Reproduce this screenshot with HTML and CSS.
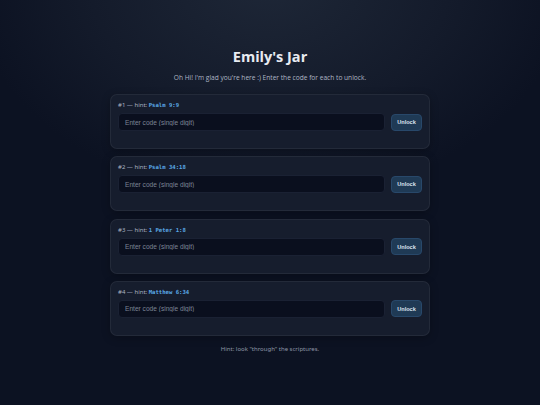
FILE: index.html
```html
<!DOCTYPE html>
<html>
<head>
<meta charset="utf-8">
<link rel="stylesheet" href="styles.css">
</head>
<body>
<main class="wrap">
  <h1 class="title">Emily's Jar</h1>
  <p class="sub">Oh Hi! I'm glad you're here :) Enter the code for each to unlock.</p>
  <section class="card">
    <div class="label">#1 — hint: <code>Psalm 9:9</code></div>
    <div class="row"><input class="code" placeholder="Enter code (single digit)"><button class="btn">Unlock</button></div>
    <div class="msg"></div>
  </section>
  <section class="card">
    <div class="label">#2 — hint: <code>Psalm 34:18</code></div>
    <div class="row"><input class="code" placeholder="Enter code (single digit)"><button class="btn">Unlock</button></div>
    <div class="msg"></div>
  </section>
  <section class="card">
    <div class="label">#3 — hint: <code>1 Peter 1:8</code></div>
    <div class="row"><input class="code" placeholder="Enter code (single digit)"><button class="btn">Unlock</button></div>
    <div class="msg"></div>
  </section>
  <section class="card">
    <div class="label">#4 — hint: <code>Matthew 6:34</code></div>
    <div class="row"><input class="code" placeholder="Enter code (single digit)"><button class="btn">Unlock</button></div>
    <div class="msg"></div>
  </section>
  <p class="foot">Hint: look "through" the scriptures.</p>
</main>
</body>
</html>
```
FILE: styles.css
```css
html, body { margin: 0; padding: 0; }
body {
  width: 540px;
  height: 405px;
  overflow: hidden;
  background: radial-gradient(ellipse 300px 220px at 50% -20px, #1e2737 0%, #141b2b 60%, #0c1222 100%);
  background-color: #0c1222;
  font-family: "Open Sans", "Noto Sans", sans-serif;
  color: #e6e9ef;
}
.wrap {
  width: 320px;
  margin: 0 auto;
  padding-top: 46px;
  display: flex;
  flex-direction: column;
}
.title {
  margin: 0;
  text-align: center;
  font-size: 14.5px;
  line-height: 22px;
  font-weight: 700;
  color: #e8ebf1;
}
.sub {
  margin: 5px 0 11px;
  text-align: center;
  font-size: 6.6px;
  line-height: 10px;
  color: #aeb6c4;
}
.card {
  background: #161d2d;
  border: 1px solid rgba(255,255,255,0.06);
  border-radius: 7px;
  padding: 6px 7px 0;
  height: 47px;
  margin-bottom: 7.3px;
  box-shadow: 0 2px 8px rgba(0,0,0,0.25);
}
.label {
  font-family: "Noto Sans", sans-serif;
  font-size: 6px;
  line-height: 9px;
  color: #aab2c0;
  margin-bottom: 3px;
}
.label code {
  font-family: "DejaVu Sans Mono", monospace;
  font-weight: 700;
  font-size: 5.6px;
  color: #5aa9e6;
}
.row {
  display: flex;
  gap: 6px;
  align-items: center;
}
.code {
  flex: 1;
  height: 18px;
  box-sizing: border-box;
  background: #0a0f1e;
  border: 1px solid #1a2133;
  border-radius: 4px;
  padding: 0 6px;
  font-family: "Liberation Sans", Arial, sans-serif;
  font-size: 6.6px;
  color: #e6e9ef;
  outline: none;
}
.code::placeholder { color: #7d8595; }
.btn {
  width: 31px;
  height: 17px;
  box-sizing: border-box;
  background: #1f3a55;
  border: 1px solid #28486a;
  border-radius: 4px;
  padding: 0;
  font-family: "Liberation Sans", Arial, sans-serif;
  font-weight: 700;
  font-size: 5.6px;
  color: #dbe3ee;
}
.foot {
  margin: 2px 0 0;
  text-align: center;
  font-family: "Noto Sans", sans-serif;
  font-size: 6px;
  line-height: 9px;
  color: #8e97a6;
}
```
